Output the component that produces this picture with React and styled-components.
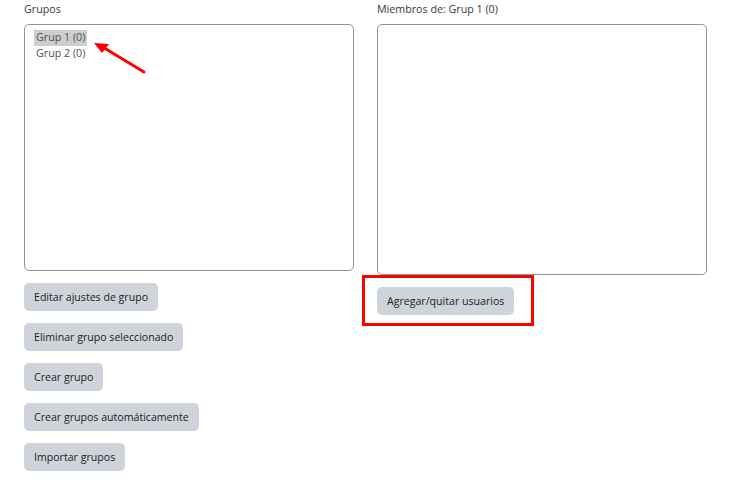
import React from 'react'
import styled, { createGlobalStyle } from 'styled-components'

const GlobalStyle = createGlobalStyle`
  body {
    margin: 0;
    background: #fff;
    font-family: "Open Sans", "Noto Sans", sans-serif;
    color: #1d2125;
  }
`

function App() {
  return (
    <>
      <GlobalStyle />
      <Page>
        <Column>
          <Label>Grupos</Label>
          <ListBox height={247}>
            <Option selected>Grup 1 (0)</Option>
            <Option>Grup 2 (0)</Option>
            <Arrow width="140" height="60" viewBox="0 0 140 60">
              <line x1="119" y1="47" x2="76" y2="21" stroke="#ff0000" strokeWidth="3" strokeLinecap="round" />
              <polygon points="69,18 84,19 77,28" fill="#ff0000" />
            </Arrow>
          </ListBox>
          <Buttons>
            <Button>Editar ajustes de grupo</Button>
            <Button>Eliminar grupo seleccionado</Button>
            <Button>Crear grupo</Button>
            <Button>Crear grupos automáticamente</Button>
            <Button>Importar grupos</Button>
          </Buttons>
        </Column>
        <Column>
          <Label>Miembros de: Grup 1 (0)</Label>
          <ListBox height={251} />
          <Buttons>
            <Marked>
              <Button>Agregar/quitar usuarios</Button>
            </Marked>
          </Buttons>
        </Column>
      </Page>
    </>
  )
}

const Page = styled.div`
  display: flex;
  gap: 23px;
  padding: 0 24px;
`

const Column = styled.div`
  width: 330px;
  display: flex;
  flex-direction: column;
`

const Label = styled.div`
  font-size: 10.7px;
  line-height: 16px;
  padding-top: 1px;
  margin-bottom: 7px;
  color: #333a40;
`

const ListBox = styled.div`
  position: relative;
  box-sizing: border-box;
  height: ${p => p.height}px;
  border: 1px solid #8f959e;
  border-radius: 5px;
  padding: 5px 9px;
`

const Option = styled.div`
  width: fit-content;
  padding: 0 2px;
  font-size: 10.7px;
  line-height: 15.5px;
  color: #495057;
  background: ${p => (p.selected ? '#cecece' : 'transparent')};
`

const Arrow = styled.svg`
  position: absolute;
  left: 0;
  top: 0;
  overflow: visible;
`

const Buttons = styled.div`
  display: flex;
  flex-direction: column;
  align-items: flex-start;
  gap: 12px;
  margin-top: 12px;
`

const Button = styled.button`
  height: 28px;
  padding: 0 10px;
  border: none;
  border-radius: 5px;
  background: #ced4da;
  color: #1d2125;
  font-family: "Open Sans", "Noto Sans", sans-serif;
  font-size: 10.6px;
  cursor: pointer;
`

const Marked = styled.div`
  position: relative;
  &::after {
    content: '';
    position: absolute;
    left: -15px;
    right: -20px;
    top: -12px;
    bottom: -11px;
    border: 3px solid #ff0000;
    pointer-events: none;
  }
`

export default App
